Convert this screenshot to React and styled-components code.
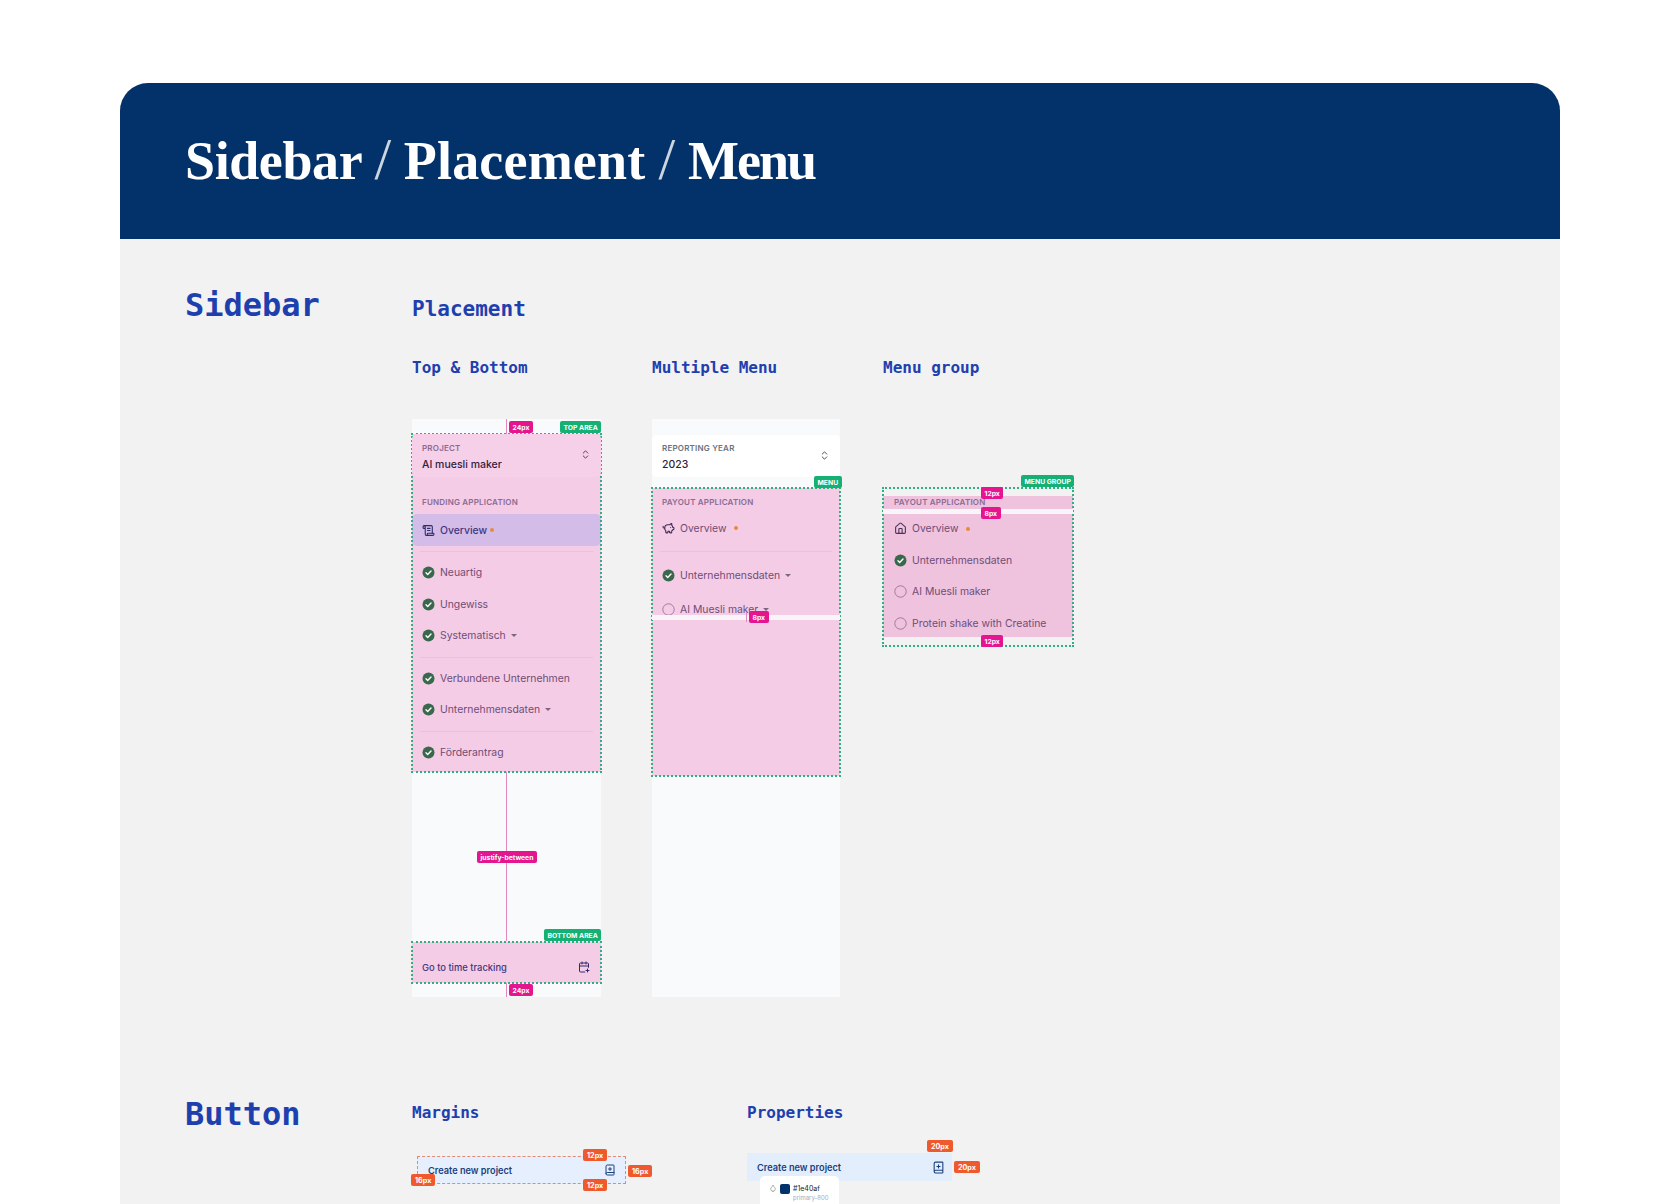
import React from 'react';
import styled, { createGlobalStyle } from 'styled-components';
import { ChevronsUpDown, ScrollText, PiggyBank, Home, CalendarPlus, BookPlus, Droplet } from 'lucide-react';

const Global = createGlobalStyle`
  html, body { margin: 0; padding: 0; background: #fff; height: 1204px; overflow: hidden; }
  body { font-family: Inter, "Liberation Sans", sans-serif; }
`;

const Panel = styled.div`
  margin: 83px 120px 0;
  height: 1121px;
  background: #f2f2f2;
  border-radius: 28px 28px 0 0;
  overflow: hidden;
`;

const Header = styled.header`
  height: 156px;
  background: #03326a;
  padding: 0 0 4px 65px;
  display: flex;
  align-items: center;
  box-sizing: border-box;
`;

const Title = styled.h1`
  margin: 0;
  font: 700 54px/1 "Liberation Serif", serif;
  color: #fff;
  letter-spacing: -0.4px;
`;

const Word = styled.span`
  letter-spacing: ${p => p.$ls}px;
`;

const Slash = styled.span`
  font-weight: 400;
  font-size: 60px;
  opacity: 0.8;
`;

const Section = styled.section`
  display: grid;
  grid-template-columns: 227px 1fr;
  padding-left: 65px;
  padding-top: ${p => p.$top}px;
`;

const SectionTitle = styled.h2`
  margin: 0;
  font: 700 32px/36px "DejaVu Sans Mono", monospace;
  color: #1e40af;
`;

const GroupTitle = styled.h3`
  margin: 10px 0 37px;
  font: 700 21px/24px "DejaVu Sans Mono", monospace;
  color: #1e40af;
`;

const SubTitle = styled.h4`
  margin: 0;
  font: 700 16px/20px "DejaVu Sans Mono", monospace;
  color: #1e40af;
`;

const Columns = styled.div`
  display: grid;
  grid-template-columns: 240px 231px 1fr;
`;

const MockSlot = styled.div`
  margin-top: 41px;
`;

const MockSidebar = styled.div`
  position: relative;
  width: ${p => p.$w || 189}px;
  height: 578px;
  background: #f8fafc;
  display: flex;
  flex-direction: column;
  box-sizing: border-box;
  padding-top: ${p => p.$pad}px;
`;

const Zone = styled.div`
  position: relative;
  height: ${p => p.$h}px;
  margin-top: ${p => p.$mt || 0}px;
  background: ${p => p.$bg || '#f5cce6'};
  outline: 2px dotted #2fb083;
  outline-offset: -1px;
  box-sizing: border-box;
`;

const GroupZone = styled(Zone)`
  padding-top: 8px;
`;

const Spring = styled.div`
  flex: 1;
`;

const Select = styled.div`
  height: ${p => p.$h}px;
  padding: ${p => p.$pt}px 10px 0;
  box-sizing: border-box;
  position: relative;
  background: ${p => p.$bg};
  border-radius: 5px;
`;

const SelectLabel = styled.div`
  font-size: 8px;
  line-height: 12px;
  font-weight: 600;
  letter-spacing: 0.2px;
  color: ${p => p.$color};
`;

const SelectValue = styled.div`
  margin-top: 3px;
  font-size: 10.5px;
  line-height: 15px;
  font-weight: 500;
  color: #33203c;
`;

const SelectChevron = styled(ChevronsUpDown)`
  position: absolute;
  right: 10.5px;
  top: 15px;
  color: #3a3a4a;
`;

const MenuLabel = styled.div`
  padding-left: 10px;
  margin-top: ${p => p.$mt}px;
  font-size: 8px;
  line-height: 13px;
  font-weight: 600;
  letter-spacing: 0.2px;
  color: #8b6b92;
  white-space: nowrap;
`;

const Row = styled.div`
  height: ${p => p.$h || 31.5}px;
  display: flex;
  align-items: center;
  gap: 5px;
  padding-left: 10px;
  font-size: 10.4px;
  color: #6f4d77;
  white-space: nowrap;
  margin-top: ${p => p.$mt || 0}px;
`;

const ActiveRow = styled(Row)`
  background: #d3bce8;
  border-radius: 5px;
  color: #40377f;
  font-weight: 500;
`;

const Divider = styled.div`
  height: 1px;
  margin: ${p => p.$mt || 5}px 8px 5px;
  background: #ecc0dc;
`;

const Caret = styled.span`
  width: 0;
  height: 0;
  border-left: 3px solid transparent;
  border-right: 3px solid transparent;
  border-top: 3px solid #7d6483;
`;

const Dot = styled.span`
  width: 4px;
  height: 4px;
  margin-left: ${p => p.$ml || -2}px;
  border-radius: 50%;
  background: #e88a3c;
`;

const BottomRow = styled.div`
  height: 41px;
  display: flex;
  align-items: flex-end;
  justify-content: space-between;
  padding: 0 11px 10px 10px;
  box-sizing: border-box;
  font-size: 9.4px;
  font-weight: 500;
  color: #40377f;
`;

const Tag = styled.span`
  position: absolute;
  z-index: 3;
  left: ${p => p.$x}px;
  top: ${p => p.$y}px;
  height: ${p => p.$h || 12}px;
  padding: 0 3.5px;
  display: flex;
  align-items: center;
  border-radius: 2px;
  background: ${p => p.$bg || '#e5148f'};
  color: #fff;
  font-size: 6.8px;
  font-weight: 700;
  white-space: nowrap;
`;

const OrangeTag = styled(Tag)`
  background: #ee5a2d;
  padding: 0 4px;
  font-size: 7.2px;
  border-radius: 2px;
`;

const GapLine = styled.div`
  position: absolute;
  z-index: 2;
  left: ${p => p.$x}px;
  top: ${p => p.$y}px;
  width: 1.5px;
  height: ${p => p.$h}px;
  background: #e388bd;
`;

const Strip = styled.div`
  position: absolute;
  z-index: 2;
  left: 0;
  right: 0;
  top: ${p => p.$y}px;
  height: ${p => p.$h}px;
  background: ${p => p.$bg || '#f8f4f7'};
`;

const GroupMock = styled.div`
  position: relative;
  width: 190px;
  margin-top: 110px;
`;

const GroupInner = styled.div`
  height: 141px;
  background: #efc3de;
`;

const GroupLabel = styled(MenuLabel)`
  padding-left: 11px;
`;

const GroupRows = styled.div`
  padding: 4px 0 0 1px;
`;

const BottomSpacer = styled.div`
  height: 14px;
`;

const ButtonSlot = styled.div`
  position: relative;
  height: 90px;
`;

const FakeButton = styled.div`
  position: absolute;
  display: flex;
  align-items: center;
  justify-content: space-between;
  box-sizing: border-box;
  left: ${p => p.$x}px;
  top: ${p => p.$y}px;
  width: ${p => p.$w}px;
  height: 28px;
  background: ${p => p.$bg};
  padding: 0 ${p => p.$pr}px 0 ${p => p.$pl}px;
  font-size: 9.2px;
  font-weight: 600;
  color: #1c3f7c;
  border: ${p => (p.$dashed ? '1px dashed #e58a70' : 'none')};
`;

const ButtonColumns = styled.div`
  display: grid;
  grid-template-columns: 335px 1fr;
  margin-top: 7px;
`;

const Swatch = styled.div`
  position: absolute;
  left: 13px;
  top: 53px;
  width: 79px;
  height: 40px;
  background: #fff;
  border-radius: 5px 5px 0 0;
  display: flex;
  gap: 3px;
  padding: 8px 0 0 9px;
  box-sizing: border-box;
  color: #8c8c8c;
`;

const Chip = styled.span`
  width: 10px;
  height: 10px;
  border-radius: 2px;
  background: #03326a;
`;

const SwatchName = styled.div`
  font-size: 7px;
  line-height: 10px;
  color: #222;
`;

const SwatchSub = styled.div`
  font-size: 6px;
  line-height: 8px;
  color: #aaa;
`;

const CheckDone = () => (
  <svg width="13" height="13" viewBox="0 0 13 13">
    <circle cx="6.5" cy="6.5" r="6" fill="#39694c" />
    <path d="M4 6.8l1.7 1.6L9 5" fill="none" stroke="#fff" strokeWidth="1.4" strokeLinecap="round" strokeLinejoin="round" />
  </svg>
);

const CheckEmpty = () => (
  <svg width="13" height="13" viewBox="0 0 13 13">
    <circle cx="6.5" cy="6.5" r="5.7" fill="none" stroke="#a0799f" strokeWidth="1" />
  </svg>
);

const Check = ({ label, caret, empty, ...rest }) => (
  <Row {...rest}>
    {empty ? <CheckEmpty /> : <CheckDone />}
    {label}
    {caret && <Caret />}
  </Row>
);

export default function App() {
  return (
    <>
      <Global />
      <Panel>
        <Header>
          <Title>Sidebar <Slash>/</Slash> <Word $ls={0.2}>Placement</Word> <Slash>/</Slash> <Word $ls={-2}>Menu</Word></Title>
        </Header>

        <Section $top={48}>
          <SectionTitle>Sidebar</SectionTitle>
          <div>
            <GroupTitle>Placement</GroupTitle>
            <Columns>
              <div>
                <SubTitle>Top &amp; Bottom</SubTitle>
                <MockSlot>
                  <MockSidebar $pad={15}>
                    <GapLine $x={93.5} $y={0} $h={15} />
                    <Tag $x={97} $y={2}>24px</Tag>
                    <Tag $x={148} $y={2} $bg="#14b074">TOP AREA</Tag>
                    <Zone $h={338}>
                      <Select $h={43} $pt={8} $bg="#f6d0e8">
                        <SelectLabel $color="#8b6b92">PROJECT</SelectLabel>
                        <SelectValue>AI muesli maker</SelectValue>
                        <SelectChevron size={11} />
                      </Select>
                      <MenuLabel $mt={19}>FUNDING APPLICATION</MenuLabel>
                      <ActiveRow $h={32} $mt={5}>
                        <ScrollText size={13} color="#2f2a6a" />
                        Overview<Dot />
                      </ActiveRow>
                      <Divider />
                      <Check label="Neuartig" />
                      <Check label="Ungewiss" />
                      <Check label="Systematisch" caret />
                      <Divider />
                      <Check label="Verbundene Unternehmen" />
                      <Check label="Unternehmensdaten" caret />
                      <Divider />
                      <Check label="Förderantrag" />
                    </Zone>
                    <GapLine $x={93.5} $y={353} $h={169} />
                    <Tag $x={65} $y={432}>justify-between</Tag>
                    <Spring />
                    <Tag $x={132} $y={510} $bg="#14b074">BOTTOM AREA</Tag>
                    <Zone $h={41}>
                      <BottomRow>
                        Go to time tracking
                        <CalendarPlus size={12} color="#2f2a6a" />
                      </BottomRow>
                    </Zone>
                    <GapLine $x={93.5} $y={564} $h={14} />
                    <Tag $x={97} $y={565}>24px</Tag>
                    <BottomSpacer />
                  </MockSidebar>
                </MockSlot>
              </div>

              <div>
                <SubTitle>Multiple Menu</SubTitle>
                <MockSlot>
                  <MockSidebar $pad={16} $w={188}>
                    <Select $h={42} $pt={7} $bg="#fff">
                      <SelectLabel $color="#6b7280">REPORTING YEAR</SelectLabel>
                      <SelectValue>2023</SelectValue>
                      <SelectChevron size={11} />
                    </Select>
                    <Tag $x={162} $y={57} $bg="#14b074">MENU</Tag>
                    <Zone $h={288} $mt={11}>
                      <MenuLabel $mt={8}>PAYOUT APPLICATION</MenuLabel>
                      <Row $h={32} $mt={3}>
                        <PiggyBank size={13} color="#3a2a50" />
                        Overview<Dot $ml={3} />
                      </Row>
                      <Divider $mt={7} />
                      <Check label="Unternehmensdaten" caret $h={32} $mt={7} />
                      <Check label="AI Muesli maker" caret empty $h={32} $mt={2} />
                      <Strip $y={127} $h={5} />
                      <GapLine $x={93.5} $y={124} $h={10} />
                      <Tag $x={97} $y={123}>8px</Tag>
                    </Zone>
                  </MockSidebar>
                </MockSlot>
              </div>

              <div>
                <SubTitle>Menu group</SubTitle>
                <GroupMock>
                  <Tag $x={138} $y={-13} $bg="#14b074">MENU GROUP</Tag>
                  <GroupZone $h={158} $bg="transparent">
                    <GroupInner>
                      <GroupLabel $mt={0}>PAYOUT APPLICATION</GroupLabel>
                      <GroupRows>
                        <Row>
                          <Home size={13} color="#4a3358" />
                          Overview<Dot $ml={3} />
                        </Row>
                        <Check label="Unternehmensdaten" />
                        <Check label="AI Muesli maker" empty />
                        <Check label="Protein shake with Creatine" empty />
                      </GroupRows>
                    </GroupInner>
                    <Strip $y={21} $h={5} />
                    <Tag $x={98} $y={-1}>12px</Tag>
                    <Tag $x={98} $y={19}>8px</Tag>
                    <Tag $x={98} $y={147}>12px</Tag>
                  </GroupZone>
                </GroupMock>
              </div>
            </Columns>
          </div>
        </Section>

        <Section $top={99}>
          <SectionTitle>Button</SectionTitle>
          <ButtonColumns>
            <div>
              <SubTitle>Margins</SubTitle>
              <ButtonSlot>
                <FakeButton $x={5} $y={33} $w={209} $bg="#e6effd" $pl={10} $pr={9} $dashed>
                  Create new project
                  <BookPlus size={12} color="#1c3f7c" />
                </FakeButton>
                <OrangeTag $x={171} $y={26}>12px</OrangeTag>
                <OrangeTag $x={171} $y={56}>12px</OrangeTag>
                <OrangeTag $x={216} $y={42}>16px</OrangeTag>
                <OrangeTag $x={-1} $y={51}>16px</OrangeTag>
              </ButtonSlot>
            </div>
            <div>
              <SubTitle>Properties</SubTitle>
              <ButtonSlot>
                <FakeButton $x={0} $y={30} $w={205} $bg="#e3eefc" $pl={10} $pr={7}>
                  Create new project
                  <BookPlus size={13} color="#1c3f7c" />
                </FakeButton>
                <OrangeTag $x={180} $y={17}>20px</OrangeTag>
                <OrangeTag $x={207} $y={38}>20px</OrangeTag>
                <Swatch>
                  <Droplet size={8} />
                  <Chip />
                  <div>
                    <SwatchName>#1e40af</SwatchName>
                    <SwatchSub>primary-800</SwatchSub>
                  </div>
                </Swatch>
              </ButtonSlot>
            </div>
          </ButtonColumns>
        </Section>
      </Panel>
    </>
  );
}
